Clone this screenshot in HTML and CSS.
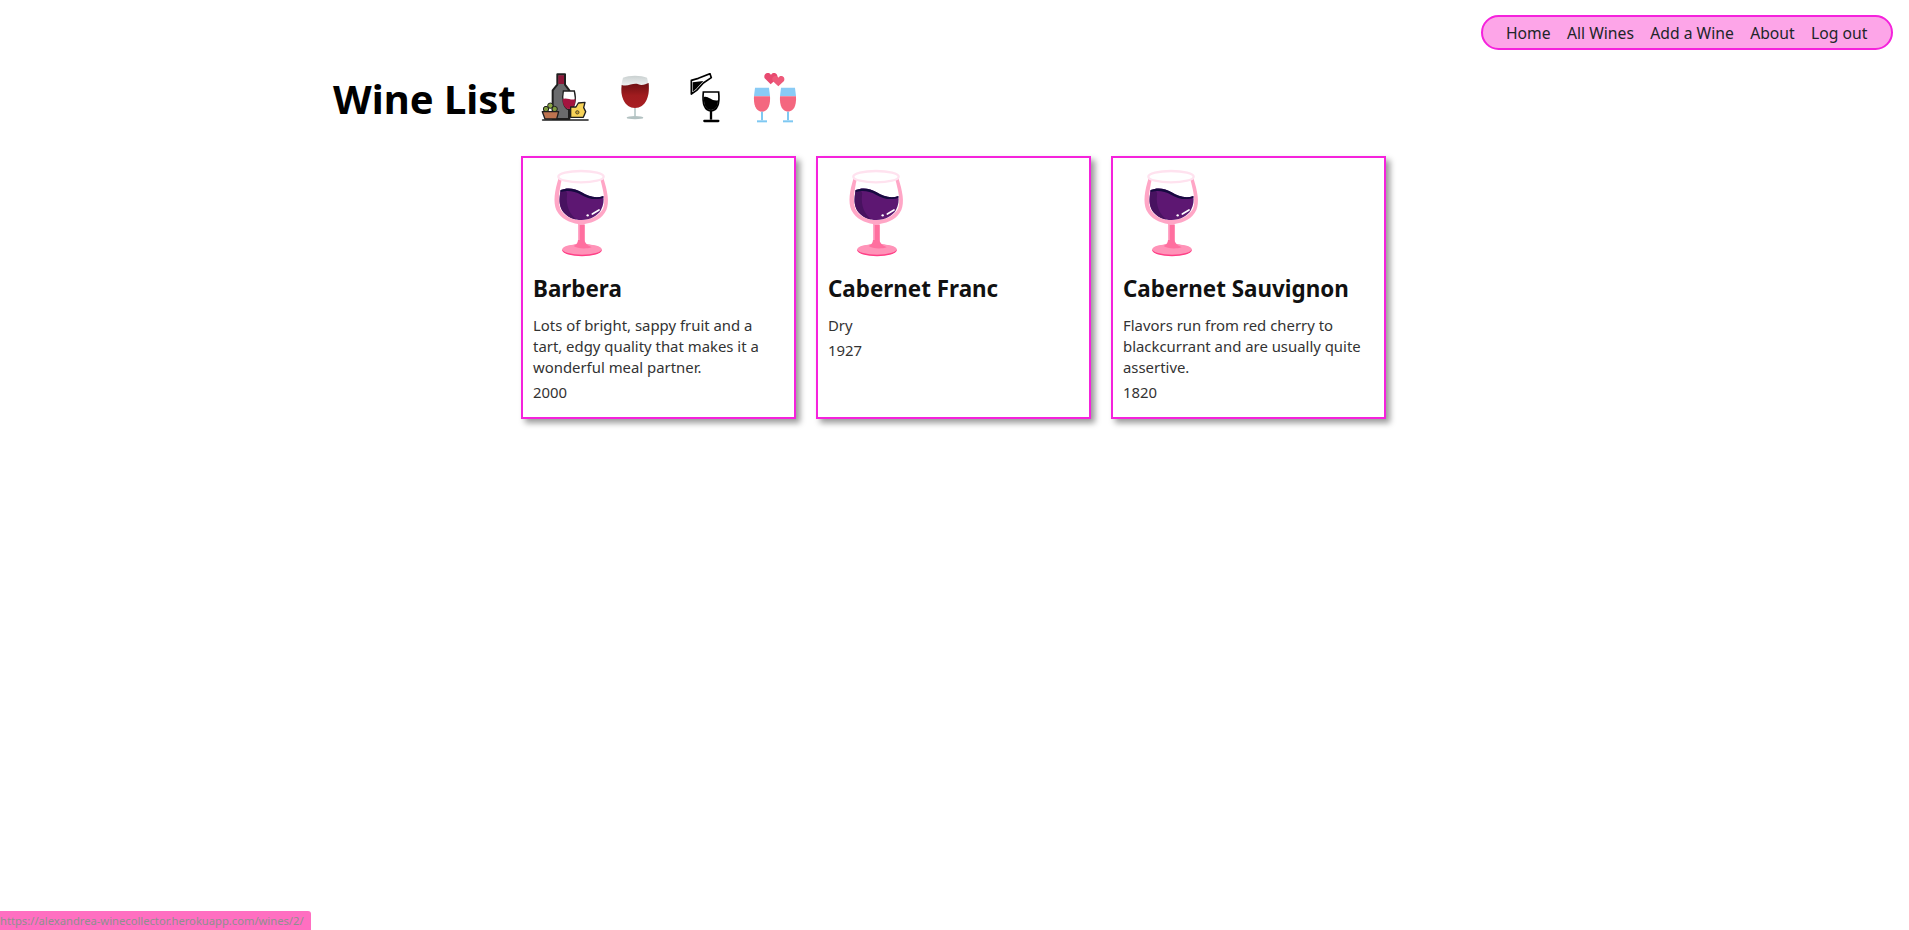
FILE: index.html
```html
<!DOCTYPE html>
<html lang="en">
<head>
<meta charset="utf-8">
<title>Wine List</title>
<link rel="stylesheet" href="styles.css">
</head>
<body>
<svg class="defs" width="0" height="0" aria-hidden="true">
  <defs>
    <linearGradient id="redwine" x1="0" y1="0" x2="0" y2="1">
      <stop offset="0" stop-color="#6d1013"/>
      <stop offset="0.5" stop-color="#a01c1f"/>
      <stop offset="1" stop-color="#a81f24"/>
    </linearGradient>
    <linearGradient id="airglass" x1="0" y1="0" x2="0" y2="1">
      <stop offset="0" stop-color="#c9d0d0"/>
      <stop offset="0.3" stop-color="#eef0f0"/>
      <stop offset="1" stop-color="#dfe3e3"/>
    </linearGradient>
  </defs>
  <symbol id="glass" viewBox="6 15 288 288">
    <path d="M84 50 C70 95 66 125 76 150 C90 178 118 188 141 192 L141 240 C141 252 132 256 120 258 L186 258 C172 256 161 252 161 240 L161 192 C188 188 214 176 226 150 C236 125 230 95 216 50 Z" fill="#ffa6c6"/>
    <path d="M93 55 C84 95 80 125 88 146 C100 170 125 180 150 180 C178 180 204 168 216 146 C224 125 218 95 207 55 Z" fill="#fff"/>
    <path d="M89 90 C84 118 84 135 94 152 C108 172 130 180 152 180 C176 180 200 168 210 150 C218 135 219 122 217 108 C196 116 172 110 152 97 C132 84 108 82 89 90 Z" fill="#5d1772"/>
    <path d="M89 90 C84 118 84 135 94 152 C104 166 120 175 136 178 C118 165 104 140 108 105 C112 96 100 88 89 90 Z" fill="#481260"/>
    <path d="M89 90 C108 82 132 84 152 97 C172 110 196 116 217 108 L217 113 C196 122 170 116 150 104 C130 92 108 90 89 96 Z" fill="#170a40"/>
    <ellipse cx="150" cy="50" rx="68" ry="17" fill="#fff" stroke="#ffe2ef" stroke-width="7"/>
    <path d="M184 162 L204 150" stroke="#fff" stroke-width="5" stroke-linecap="round"/>
    <circle cx="170" cy="166" r="3.5" fill="#fff"/>
    <ellipse cx="153" cy="271" rx="59" ry="18" fill="#ff3f86"/>
    <ellipse cx="153" cy="268" rx="59" ry="16" fill="#ff93b8"/>
    <path d="M141 240 L161 240 C161 252 172 256 182 262 C165 268 138 266 128 258 C136 254 141 250 141 240 Z" fill="#ff6f9f"/>
    <path d="M146 195 L161 195 L161 240 L146 240 Z" fill="#ff6f9f"/>
  </symbol>
</svg>

<header class="topbar">
  <nav class="pill">
    <a class="link" href="#">Home</a>
    <a class="link" href="#">All Wines</a>
    <a class="link" href="#">Add a Wine</a>
    <a class="link" href="#">About</a>
    <a class="link" href="#">Log out</a>
  </nav>
</header>

<main class="page">
  <section class="title-row">
    <h1 class="title">Wine List</h1>
    <div class="icons">
      <svg class="icon" viewBox="660 70 150 150" aria-hidden="true">
        <path d="M712 74 H735 V105 L748 122 V208 H698 V122 L712 105 Z" fill="#6a6b6d" stroke="#1f1f1f" stroke-width="6" stroke-linejoin="round"/>
        <rect x="715" y="77" width="17" height="26" fill="#8c1738"/>
        <path d="M730 124 H763 C770 150 764 178 747 180 C732 178 724 150 730 124 Z" fill="#fff" stroke="#1f1f1f" stroke-width="4"/>
        <path d="M728 148 C740 142 755 154 766 148 C767 165 760 178 747 178 C735 178 728 165 728 148 Z" fill="#a3143f"/>
        <path d="M747 180 V206" stroke="#1f1f1f" stroke-width="6"/>
        <path d="M752 172 L768 172 L775 160 L795 158 L791 174 L797 186 L790 203 H752 Z" fill="#f7d358" stroke="#1f1f1f" stroke-width="4" stroke-linejoin="round"/>
        <circle cx="772" cy="188" r="5" fill="#caa12e" stroke="#1f1f1f" stroke-width="2"/>
        <circle cx="678" cy="178" r="8" fill="#7e9b3d" stroke="#1f1f1f" stroke-width="3"/>
        <circle cx="691" cy="168" r="8" fill="#8aa744" stroke="#1f1f1f" stroke-width="3"/>
        <circle cx="704" cy="178" r="8" fill="#7e9b3d" stroke="#1f1f1f" stroke-width="3"/>
        <path d="M667 186 H716 L710 208 H675 Z" fill="#bd7350" stroke="#1f1f1f" stroke-width="4" stroke-linejoin="round"/>
        <path d="M668 211 H804" stroke="#1f1f1f" stroke-width="5" stroke-linecap="round"/>
      </svg>
      <svg class="icon" viewBox="870 70 150 150" aria-hidden="true">
        <path d="M909 84 C925 76 965 76 981 84 C988 110 990 130 980 150 C972 167 960 174 945 175 C930 174 918 167 910 150 C900 130 902 110 909 84 Z" fill="url(#airglass)"/>
        <path d="M905 106 C925 112 940 98 955 104 C968 109 978 102 986 100 C988 125 985 140 980 150 C972 167 960 174 945 175 C930 174 918 167 910 150 C904 137 903 122 905 106 Z" fill="url(#redwine)"/>
        <path d="M942 175 H948 V200 H942 Z" fill="#c3d1d1"/>
        <ellipse cx="945" cy="204" rx="25" ry="5" fill="#b3c2c2"/>
      </svg>
      <svg class="icon" viewBox="1080 70 150 150" aria-hidden="true">
        <path d="M1114 92 L1135 86 L1170 72 L1174 84 L1150 100 L1130 122 L1114 133 Z" fill="#fff" stroke="#000" stroke-width="5" stroke-linejoin="round"/>
        <path d="M1118 98 L1150 94 L1128 118 L1118 126 Z" fill="#000"/>
        <path d="M1150 127 H1196 C1200 165 1190 182 1173 184 C1156 182 1146 165 1150 127 Z" fill="#fff" stroke="#000" stroke-width="5"/>
        <path d="M1152 142 C1165 138 1175 156 1194 152 C1194 170 1186 181 1173 181 C1160 181 1150 168 1152 142 Z" fill="#000"/>
        <path d="M1173 184 V210" stroke="#000" stroke-width="7"/>
        <path d="M1153 214 H1195" stroke="#000" stroke-width="7" stroke-linecap="round"/>
      </svg>
      <svg class="icon" viewBox="1290 70 150 150" aria-hidden="true">
        <path d="M1352 104 L1334 86 C1328 70 1348 64 1353 76 C1358 64 1376 70 1372 86 Z" fill="#e84a70"/>
        <path d="M1375 110 L1358 94 C1352 80 1370 74 1375 84 C1380 74 1398 80 1392 94 Z" fill="#ee5a7a"/>
        <path d="M1305 114 H1347 L1350 140 H1302 Z" fill="#89cbf5"/>
        <path d="M1302 140 H1350 C1352 170 1342 186 1326 186 C1310 186 1300 170 1302 140 Z" fill="#f4677f"/>
        <path d="M1326 186 V212" stroke="#7ec8f2" stroke-width="6"/>
        <path d="M1311 215 H1341" stroke="#7ec8f2" stroke-width="6"/>
        <path d="M1383 114 H1425 L1428 140 H1380 Z" fill="#89cbf5"/>
        <path d="M1380 140 H1428 C1430 170 1420 186 1404 186 C1388 186 1378 170 1380 140 Z" fill="#f4677f"/>
        <path d="M1404 186 V212" stroke="#7ec8f2" stroke-width="6"/>
        <path d="M1389 215 H1419" stroke="#7ec8f2" stroke-width="6"/>
      </svg>
    </div>
  </section>

  <section class="cards">
    <article class="card">
      <svg class="glass"><use href="#glass"/></svg>
      <h2 class="name">Barbera</h2>
      <p class="desc">Lots of bright, sappy fruit and a tart, edgy quality that makes it a wonderful meal partner.</p>
      <p class="year">2000</p>
    </article>
    <article class="card">
      <svg class="glass"><use href="#glass"/></svg>
      <h2 class="name">Cabernet Franc</h2>
      <p class="desc">Dry</p>
      <p class="year">1927</p>
    </article>
    <article class="card">
      <svg class="glass"><use href="#glass"/></svg>
      <h2 class="name">Cabernet Sauvignon</h2>
      <p class="desc">Flavors run from red cherry to blackcurrant and are usually quite assertive.</p>
      <p class="year">1820</p>
    </article>
  </section>
</main>

<div class="status">https://alexandrea-winecollector.herokuapp.com/wines/2/</div>
</body>
</html>
```
FILE: styles.css
```css
* { box-sizing: border-box; }
html, body { height: 100%; }
body {
  margin: 0;
  background: #fff;
  color: #212529;
  font-family: "Noto Sans", "Open Sans", sans-serif;
  overflow: hidden;
}
.defs { position: absolute; }
.topbar {
  display: flex;
  justify-content: flex-end;
  padding: 15px 16px 0 0;
}
.pill {
  display: flex;
  gap: 16.4px;
  align-items: center;
  width: 412px;
  height: 35px;
  padding: 0 23px;
  background: #fda5e8;
  border: 2px solid #f522dc;
  border-radius: 18px;
}
.link {
  color: #212529;
  font-size: 15.7px;
  text-decoration: none;
  white-space: nowrap;
}
.page { padding-left: 333px; }
.title-row {
  display: flex;
  align-items: center;
  height: 72px;
  margin-top: 12px;
}
.title {
  margin: 0;
  width: 207px;
  font-size: 40px;
  font-weight: 700;
  color: #000;
  white-space: nowrap;
}
.icons { display: flex; gap: 20px; }
.icon { display: block; width: 50px; height: 50px; }
.cards {
  display: flex;
  gap: 20px;
  margin: 22px 0 0 188px;
}
.card {
  width: 275px;
  height: 263px;
  padding: 7px 9px 7px 10px;
  background: #fff;
  border: 2px solid #f522dc;
  box-shadow: 4px 4px 6px rgba(0, 0, 0, 0.4);
}
.glass { display: block; width: 96px; height: 96px; }
.name {
  margin: 12px 0 0;
  font-size: 22.4px;
  line-height: 32px;
  font-weight: 700;
  color: #111;
  white-space: nowrap;
}
.desc, .year {
  margin: 0;
  font-size: 14.9px;
  line-height: 21px;
  color: #333;
}
.desc { margin-top: 10px; padding-right: 12px; }
.year { margin-top: 4px; }
.status {
  position: fixed;
  left: 0;
  bottom: 0;
  width: 311px;
  height: 19px;
  background: #ff6fc1;
  border-top-right-radius: 3px;
  color: #8f8f8f;
  font-size: 11.2px;
  line-height: 19px;
  white-space: nowrap;
}
```
